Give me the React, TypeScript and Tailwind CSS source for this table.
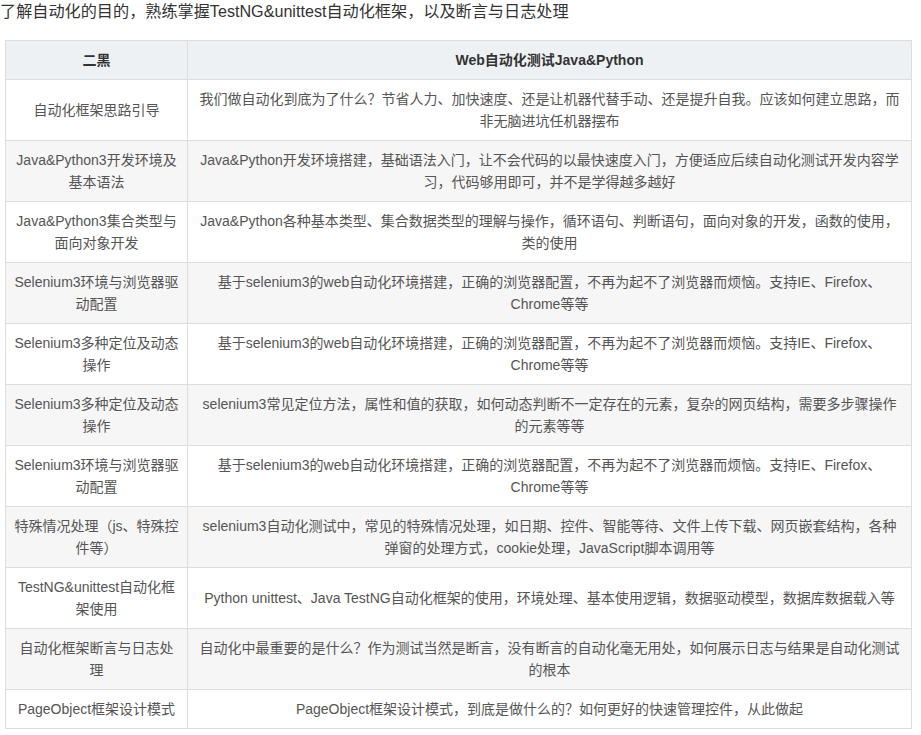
const rows: [string, string][] = [
  ["自动化框架思路引导", "我们做自动化到底为了什么？节省人力、加快速度、还是让机器代替手动、还是提升自我。应该如何建立思路，而非无脑进坑任机器摆布"],
  ["Java&Python3开发环境及基本语法", "Java&Python开发环境搭建，基础语法入门，让不会代码的以最快速度入门，方便适应后续自动化测试开发内容学习，代码够用即可，并不是学得越多越好"],
  ["Java&Python3集合类型与面向对象开发", "Java&Python各种基本类型、集合数据类型的理解与操作，循环语句、判断语句，面向对象的开发，函数的使用，类的使用"],
  ["Selenium3环境与浏览器驱动配置", "基于selenium3的web自动化环境搭建，正确的浏览器配置，不再为起不了浏览器而烦恼。支持IE、Firefox、Chrome等等"],
  ["Selenium3多种定位及动态操作", "基于selenium3的web自动化环境搭建，正确的浏览器配置，不再为起不了浏览器而烦恼。支持IE、Firefox、Chrome等等"],
  ["Selenium3多种定位及动态操作", "selenium3常见定位方法，属性和值的获取，如何动态判断不一定存在的元素，复杂的网页结构，需要多步骤操作的元素等等"],
  ["Selenium3环境与浏览器驱动配置", "基于selenium3的web自动化环境搭建，正确的浏览器配置，不再为起不了浏览器而烦恼。支持IE、Firefox、Chrome等等"],
  ["特殊情况处理（js、特殊控件等）", "selenium3自动化测试中，常见的特殊情况处理，如日期、控件、智能等待、文件上传下载、网页嵌套结构，各种弹窗的处理方式，cookie处理，JavaScript脚本调用等"],
  ["TestNG&unittest自动化框架使用", "Python unittest、Java TestNG自动化框架的使用，环境处理、基本使用逻辑，数据驱动模型，数据库数据载入等"],
  ["自动化框架断言与日志处理", "自动化中最重要的是什么？作为测试当然是断言，没有断言的自动化毫无用处，如何展示日志与结果是自动化测试的根本"],
  ["PageObject框架设计模式", "PageObject框架设计模式，到底是做什么的？如何更好的快速管理控件，从此做起"],
];

const font = "font-['Liberation_Sans','Noto_Sans_CJK_SC',sans-serif]";

export default function App() {
  return (
    <div className={`min-h-[735px] bg-white [text-spacing-trim:space-all] ${font}`}>
      <p className="h-[22px] text-[16.15px] leading-[22px] text-[#333]">
        了解自动化的目的，熟练掌握TestNG&unittest自动化框架，以及断言与日志处理
      </p>
      <table className="mt-[18px] ml-[5px] w-[907px] table-fixed border-collapse text-[14px] leading-[22px] text-[#555]">
        <colgroup>
          <col className="w-[182px]" />
          <col />
        </colgroup>
        <thead>
          <tr className="bg-[#eef1f4]">
            <th className="border border-[#ddd] px-2 py-2 text-center font-bold text-[#333]">二黑</th>
            <th className="border border-[#ddd] px-2 py-2 text-center font-bold text-[#333]">Web自动化测试Java&Python</th>
          </tr>
        </thead>
        <tbody>
          {rows.map(([a, b], i) => (
            <tr key={i} className={i % 2 === 1 ? "bg-[#f6f6f6]" : "bg-white"}>
              <td className="border border-[#ddd] px-2 py-2 text-center align-middle">{a}</td>
              <td className="border border-[#ddd] px-2 py-2 text-center align-middle">{b}</td>
            </tr>
          ))}
        </tbody>
      </table>
    </div>
  );
}
